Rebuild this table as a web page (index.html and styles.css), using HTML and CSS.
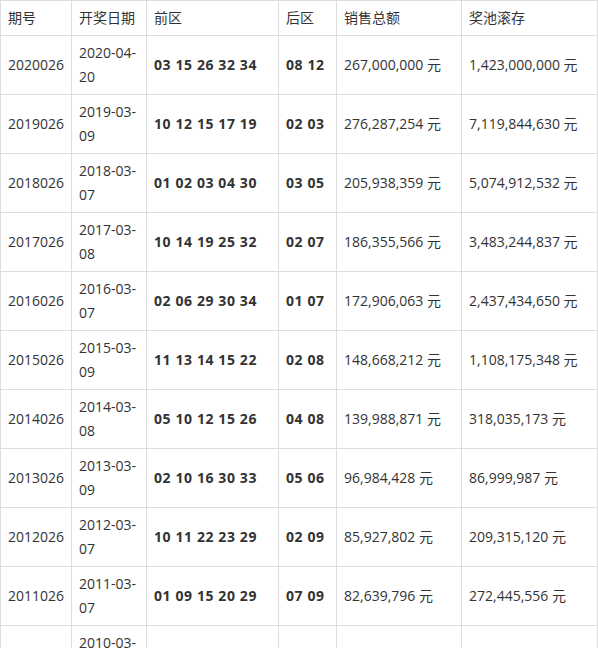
FILE: index.html
```html
<!DOCTYPE html>
<html lang="zh">
<head>
<meta charset="utf-8">
<link rel="stylesheet" href="styles.css">
</head>
<body>
<table class="lottery">
<colgroup>
<col class="c1"><col class="c2"><col class="c3"><col class="c4"><col class="c5"><col class="c6">
</colgroup>
<thead>
<tr><th>期号</th><th>开奖日期</th><th>前区</th><th>后区</th><th>销售总额</th><th>奖池滚存</th></tr>
</thead>
<tbody>
<tr><td>2020026</td><td>2020-04-20</td><td class="b">03 15 26 32 34</td><td class="b">08 12</td><td>267,000,000 元</td><td>1,423,000,000 元</td></tr>
<tr><td>2019026</td><td>2019-03-09</td><td class="b">10 12 15 17 19</td><td class="b">02 03</td><td>276,287,254 元</td><td>7,119,844,630 元</td></tr>
<tr><td>2018026</td><td>2018-03-07</td><td class="b">01 02 03 04 30</td><td class="b">03 05</td><td>205,938,359 元</td><td>5,074,912,532 元</td></tr>
<tr><td>2017026</td><td>2017-03-08</td><td class="b">10 14 19 25 32</td><td class="b">02 07</td><td>186,355,566 元</td><td>3,483,244,837 元</td></tr>
<tr><td>2016026</td><td>2016-03-07</td><td class="b">02 06 29 30 34</td><td class="b">01 07</td><td>172,906,063 元</td><td>2,437,434,650 元</td></tr>
<tr><td>2015026</td><td>2015-03-09</td><td class="b">11 13 14 15 22</td><td class="b">02 08</td><td>148,668,212 元</td><td>1,108,175,348 元</td></tr>
<tr><td>2014026</td><td>2014-03-08</td><td class="b">05 10 12 15 26</td><td class="b">04 08</td><td>139,988,871 元</td><td>318,035,173 元</td></tr>
<tr><td>2013026</td><td>2013-03-09</td><td class="b">02 10 16 30 33</td><td class="b">05 06</td><td>96,984,428 元</td><td>86,999,987 元</td></tr>
<tr><td>2012026</td><td>2012-03-07</td><td class="b">10 11 22 23 29</td><td class="b">02 09</td><td>85,927,802 元</td><td>209,315,120 元</td></tr>
<tr><td>2011026</td><td>2011-03-07</td><td class="b">01 09 15 20 29</td><td class="b">07 09</td><td>82,639,796 元</td><td>272,445,556 元</td></tr>
<tr><td>2010026</td><td>2010-03-08</td><td class="b">02 08 16 24 34</td><td class="b">04 11</td><td>75,418,204 元</td><td>166,722,508 元</td></tr>
</tbody>
</table>
</body>
</html>
```
FILE: styles.css
```css
html, body {
  margin: 0;
  padding: 0;
  background: #fff;
}
.lottery {
  border-collapse: collapse;
  table-layout: fixed;
  width: 597px;
  font-family: "Open Sans", "Noto Sans CJK SC", sans-serif;
  font-size: 14px;
  color: #333;
}
.c1 { width: 71px; }
.c2 { width: 75px; }
.c3 { width: 132px; }
.c4 { width: 58px; }
.c5 { width: 125px; }
.c6 { width: 136px; }
.lottery th,
.lottery td {
  border: 1px solid #ddd;
  padding: 5px 4px 5px 7px;
  line-height: 24px;
  text-align: left;
  font-weight: normal;
  vertical-align: middle;
  word-wrap: break-word;
}
.lottery td.b {
  font-weight: bold;
  letter-spacing: 0.6px;
}
```
